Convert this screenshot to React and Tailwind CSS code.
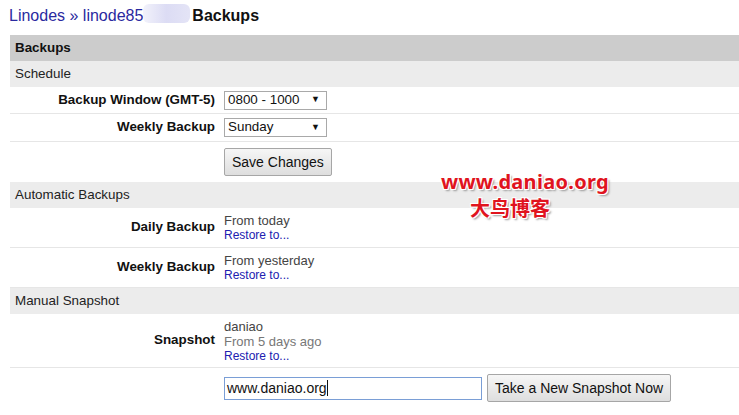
import React from 'react';

const font = { fontFamily: '"Liberation Sans", Arial, sans-serif' };

function SectionRow({ title }) {
  return <div className="h-[26px] flex items-center pl-[5px] bg-[#ececec] text-[13.4px] text-[#222]">{title}</div>;
}

function FieldRow({ label, children, h = 'h-[27px]' }) {
  return (
    <div className={`flex items-center ${h} border-b border-[#e6e6e6]`}>
      <div className="w-[205px] text-right font-bold text-[13.4px] text-[#111]">{label}</div>
      <div className="pl-[9px] flex-1">{children}</div>
    </div>
  );
}

function FakeSelect({ value }) {
  return (
    <div className="w-[103px] h-[19px] border border-[#a9a9a9] bg-white flex items-center justify-between px-[3px] text-[13.4px] text-[#111]">
      <span>{value}</span>
      <span className="text-[9px] pr-[3px]">▼</span>
    </div>
  );
}

function Restore() {
  return <div className="text-[12px] leading-[14px] text-[#2020b0]">Restore to...</div>;
}

export default function App() {
  return (
    <div className="w-[739px] h-[415px] bg-white overflow-hidden relative" style={font}>
      <div className="pl-[9px] pt-[4px] h-[35px] text-[16px] flex items-start">
        <span className="text-[#2a2aa0]">Linodes » linode85</span>
        <span className="inline-block w-[47px] h-[19px] bg-gradient-to-r from-[#f2f2fb] via-[#dcdcf4] to-[#e4e4f6] rounded-[6px]"></span>
        <span className="font-bold text-[#111] ml-[2px]">Backups</span>
      </div>

      <div className="ml-[10px]">
        <div className="h-[26px] flex items-center pl-[5px] bg-[#cccccc] font-bold text-[13.4px] text-[#111]">Backups</div>
        <SectionRow title="Schedule" />
        <FieldRow label="Backup Window (GMT-5)">
          <FakeSelect value="0800 - 1000" />
        </FieldRow>
        <FieldRow label="Weekly Backup" h="h-[28px]">
          <FakeSelect value="Sunday" />
        </FieldRow>
        <div className="h-[40px] flex items-center pl-[214px]">
          <button className="h-[28px] px-[7px] border border-[#a6a6a6] rounded-[2px] bg-gradient-to-b from-[#f6f6f6] to-[#dedede] text-[14px] text-[#111]">Save Changes</button>
        </div>
        <SectionRow title="Automatic Backups" />
        <FieldRow label="Daily Backup" h="h-[40px]">
          <div className="text-[13px] leading-[15px] text-[#444]">From today</div>
          <Restore />
        </FieldRow>
        <FieldRow label="Weekly Backup" h="h-[40px]">
          <div className="text-[13px] leading-[15px] text-[#444]">From yesterday</div>
          <Restore />
        </FieldRow>
        <SectionRow title="Manual Snapshot" />
        <FieldRow label="Snapshot" h="h-[54px]">
          <div className="text-[13px] leading-[15px] text-[#444]">daniao</div>
          <div className="text-[13px] leading-[15px] text-[#777]">From 5 days ago</div>
          <Restore />
        </FieldRow>
        <div className="h-[40px] flex items-center pl-[214px] gap-[5px]">
          <div className="w-[258px] h-[23px] border border-[#7a9ed6] bg-white flex items-center px-[2px] text-[14px] text-[#111]">
            www.daniao.org<span className="inline-block w-[1px] h-[16px] bg-[#111]"></span>
          </div>
          <button className="h-[28px] px-[7px] border border-[#a6a6a6] rounded-[2px] bg-gradient-to-b from-[#f6f6f6] to-[#dedede] text-[14px] text-[#111]">Take a New Snapshot Now</button>
        </div>
      </div>

      <div className="absolute left-[441px] top-[168px] flex flex-col items-start text-[#e0141e] font-bold [text-shadow:1px_1px_0_#fff,-1px_-1px_0_#fff,1px_-1px_0_#fff,-1px_1px_0_#fff,2px_2px_2px_#999]" style={{ fontFamily: '"Noto Sans", "Noto Sans CJK SC", sans-serif' }}>
        <div className="text-[20px] leading-[28px] tracking-[0.3px]">www.daniao.org</div>
        <div className="text-[20px] leading-[24px] ml-[29px]" style={{ fontFamily: '"Noto Sans CJK SC", sans-serif' }}>大鸟博客</div>
      </div>
    </div>
  );
}
